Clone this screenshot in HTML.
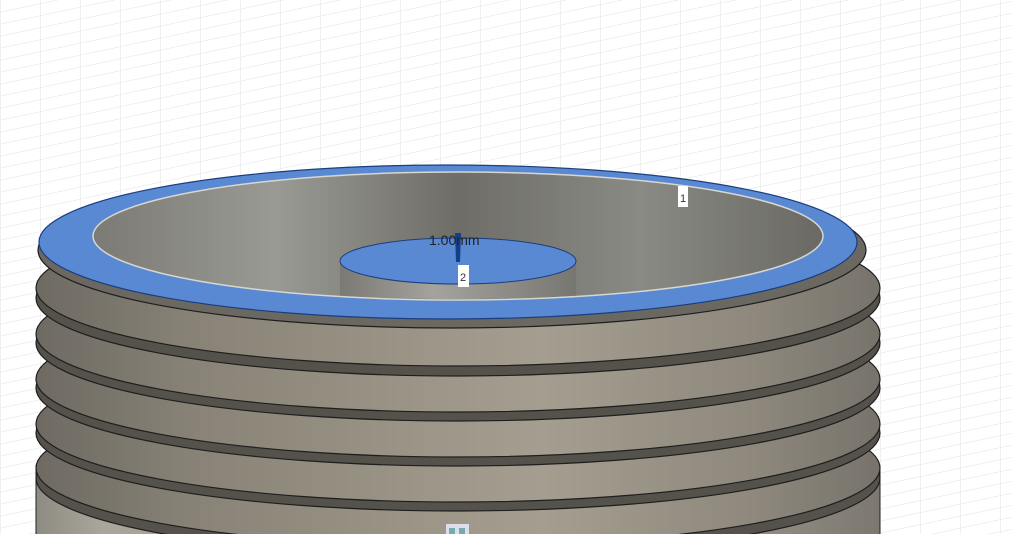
<!DOCTYPE html>
<html><head><style>html,body{margin:0;padding:0;width:1012px;height:534px;overflow:hidden;background:#fff}</style></head>
<body>
<svg width="1012" height="534" viewBox="0 0 1012 534" xmlns="http://www.w3.org/2000/svg" font-family="Liberation Sans, sans-serif">
<defs>
<linearGradient id="body" x1="0" x2="1">
<stop offset="0" stop-color="#8e8b82"/><stop offset="0.08" stop-color="#a9a69c"/><stop offset="0.5" stop-color="#8f8a80"/><stop offset="0.75" stop-color="#a29d92"/><stop offset="1" stop-color="#7c7870"/>
</linearGradient>
<linearGradient id="fl" x1="0" x2="1">
<stop offset="0" stop-color="#6e6a62"/><stop offset="0.2" stop-color="#8a8478"/><stop offset="0.6" stop-color="#a59e90"/><stop offset="0.85" stop-color="#8e887d"/><stop offset="1" stop-color="#77736b"/>
</linearGradient>
<linearGradient id="cup" x1="0" x2="1">
<stop offset="0" stop-color="#7b7a74"/><stop offset="0.25" stop-color="#9a9a94"/><stop offset="0.5" stop-color="#6e6d68"/><stop offset="0.75" stop-color="#8a8a84"/><stop offset="1" stop-color="#6a6964"/>
</linearGradient>
<linearGradient id="pil" x1="0" x2="1">
<stop offset="0" stop-color="#7a7974"/><stop offset="0.4" stop-color="#a4a39d"/><stop offset="1" stop-color="#777671"/>
</linearGradient>
<clipPath id="cupclip"><ellipse cx="458" cy="236" rx="364" ry="63"/></clipPath>
<pattern id="grid" width="40" height="12" patternUnits="userSpaceOnUse" patternTransform="skewY(-12)">
<path d="M0 0H40M0 0V12" stroke="#e2e2e2" stroke-width="1" fill="none"/>
</pattern>
</defs>
<rect width="1012" height="534" fill="url(#grid)"/>
<rect x="36" y="465" width="844" height="69" fill="url(#body)"/>
<line x1="36" y1="465" x2="36" y2="534" stroke="#222"/>
<line x1="880" y1="465" x2="880" y2="534" stroke="#222"/>
<g stroke="#1e1e1e" stroke-width="1.2">
<ellipse cx="458" cy="478" rx="422" ry="78" fill="#55524c"/>
<ellipse cx="458" cy="468" rx="422" ry="78" fill="url(#fl)"/>
<ellipse cx="458" cy="433" rx="422" ry="78" fill="#55524c"/>
<ellipse cx="458" cy="424" rx="422" ry="78" fill="url(#fl)"/>
<ellipse cx="458" cy="388" rx="422" ry="78" fill="#55524c"/>
<ellipse cx="458" cy="379" rx="422" ry="78" fill="url(#fl)"/>
<ellipse cx="458" cy="343" rx="422" ry="78" fill="#55524c"/>
<ellipse cx="458" cy="334" rx="422" ry="78" fill="url(#fl)"/>
<ellipse cx="458" cy="298" rx="422" ry="78" fill="#55524c"/>
<ellipse cx="458" cy="288" rx="422" ry="78" fill="url(#fl)"/>
<ellipse cx="452" cy="250" rx="414" ry="78" fill="#6b6862"/>
</g>
<ellipse cx="448" cy="242" rx="409" ry="77" fill="#5a89d3" stroke="#1a3e80" stroke-width="1.2"/>
<ellipse cx="458" cy="236" rx="365" ry="64" fill="url(#cup)" stroke="#d8d6d0" stroke-width="1.5"/>
<g clip-path="url(#cupclip)">
<rect x="340" y="261" width="236" height="50" fill="url(#pil)"/>
</g>
<ellipse cx="458" cy="261" rx="118" ry="23" fill="#5a89d3" stroke="#1a3e80" stroke-width="1"/>
<path d="M455 233 L461 233 L460 262 L456 262 Z" fill="#123f8a"/>
<text x="429" y="245" font-size="14" fill="#222">1.00mm</text>
<rect x="678" y="186" width="10" height="21" fill="#fff"/>
<text x="680" y="202" font-size="11" fill="#333">1</text>
<rect x="458" y="265" width="11" height="22" fill="#fff"/>
<text x="460" y="281" font-size="11" fill="#333">2</text>
<rect x="446" y="524" width="23" height="10" fill="#dde"/>
<rect x="449" y="528" width="6" height="6" fill="#7aa"/><rect x="459" y="528" width="6" height="6" fill="#7aa"/>
</svg>
</body></html>
